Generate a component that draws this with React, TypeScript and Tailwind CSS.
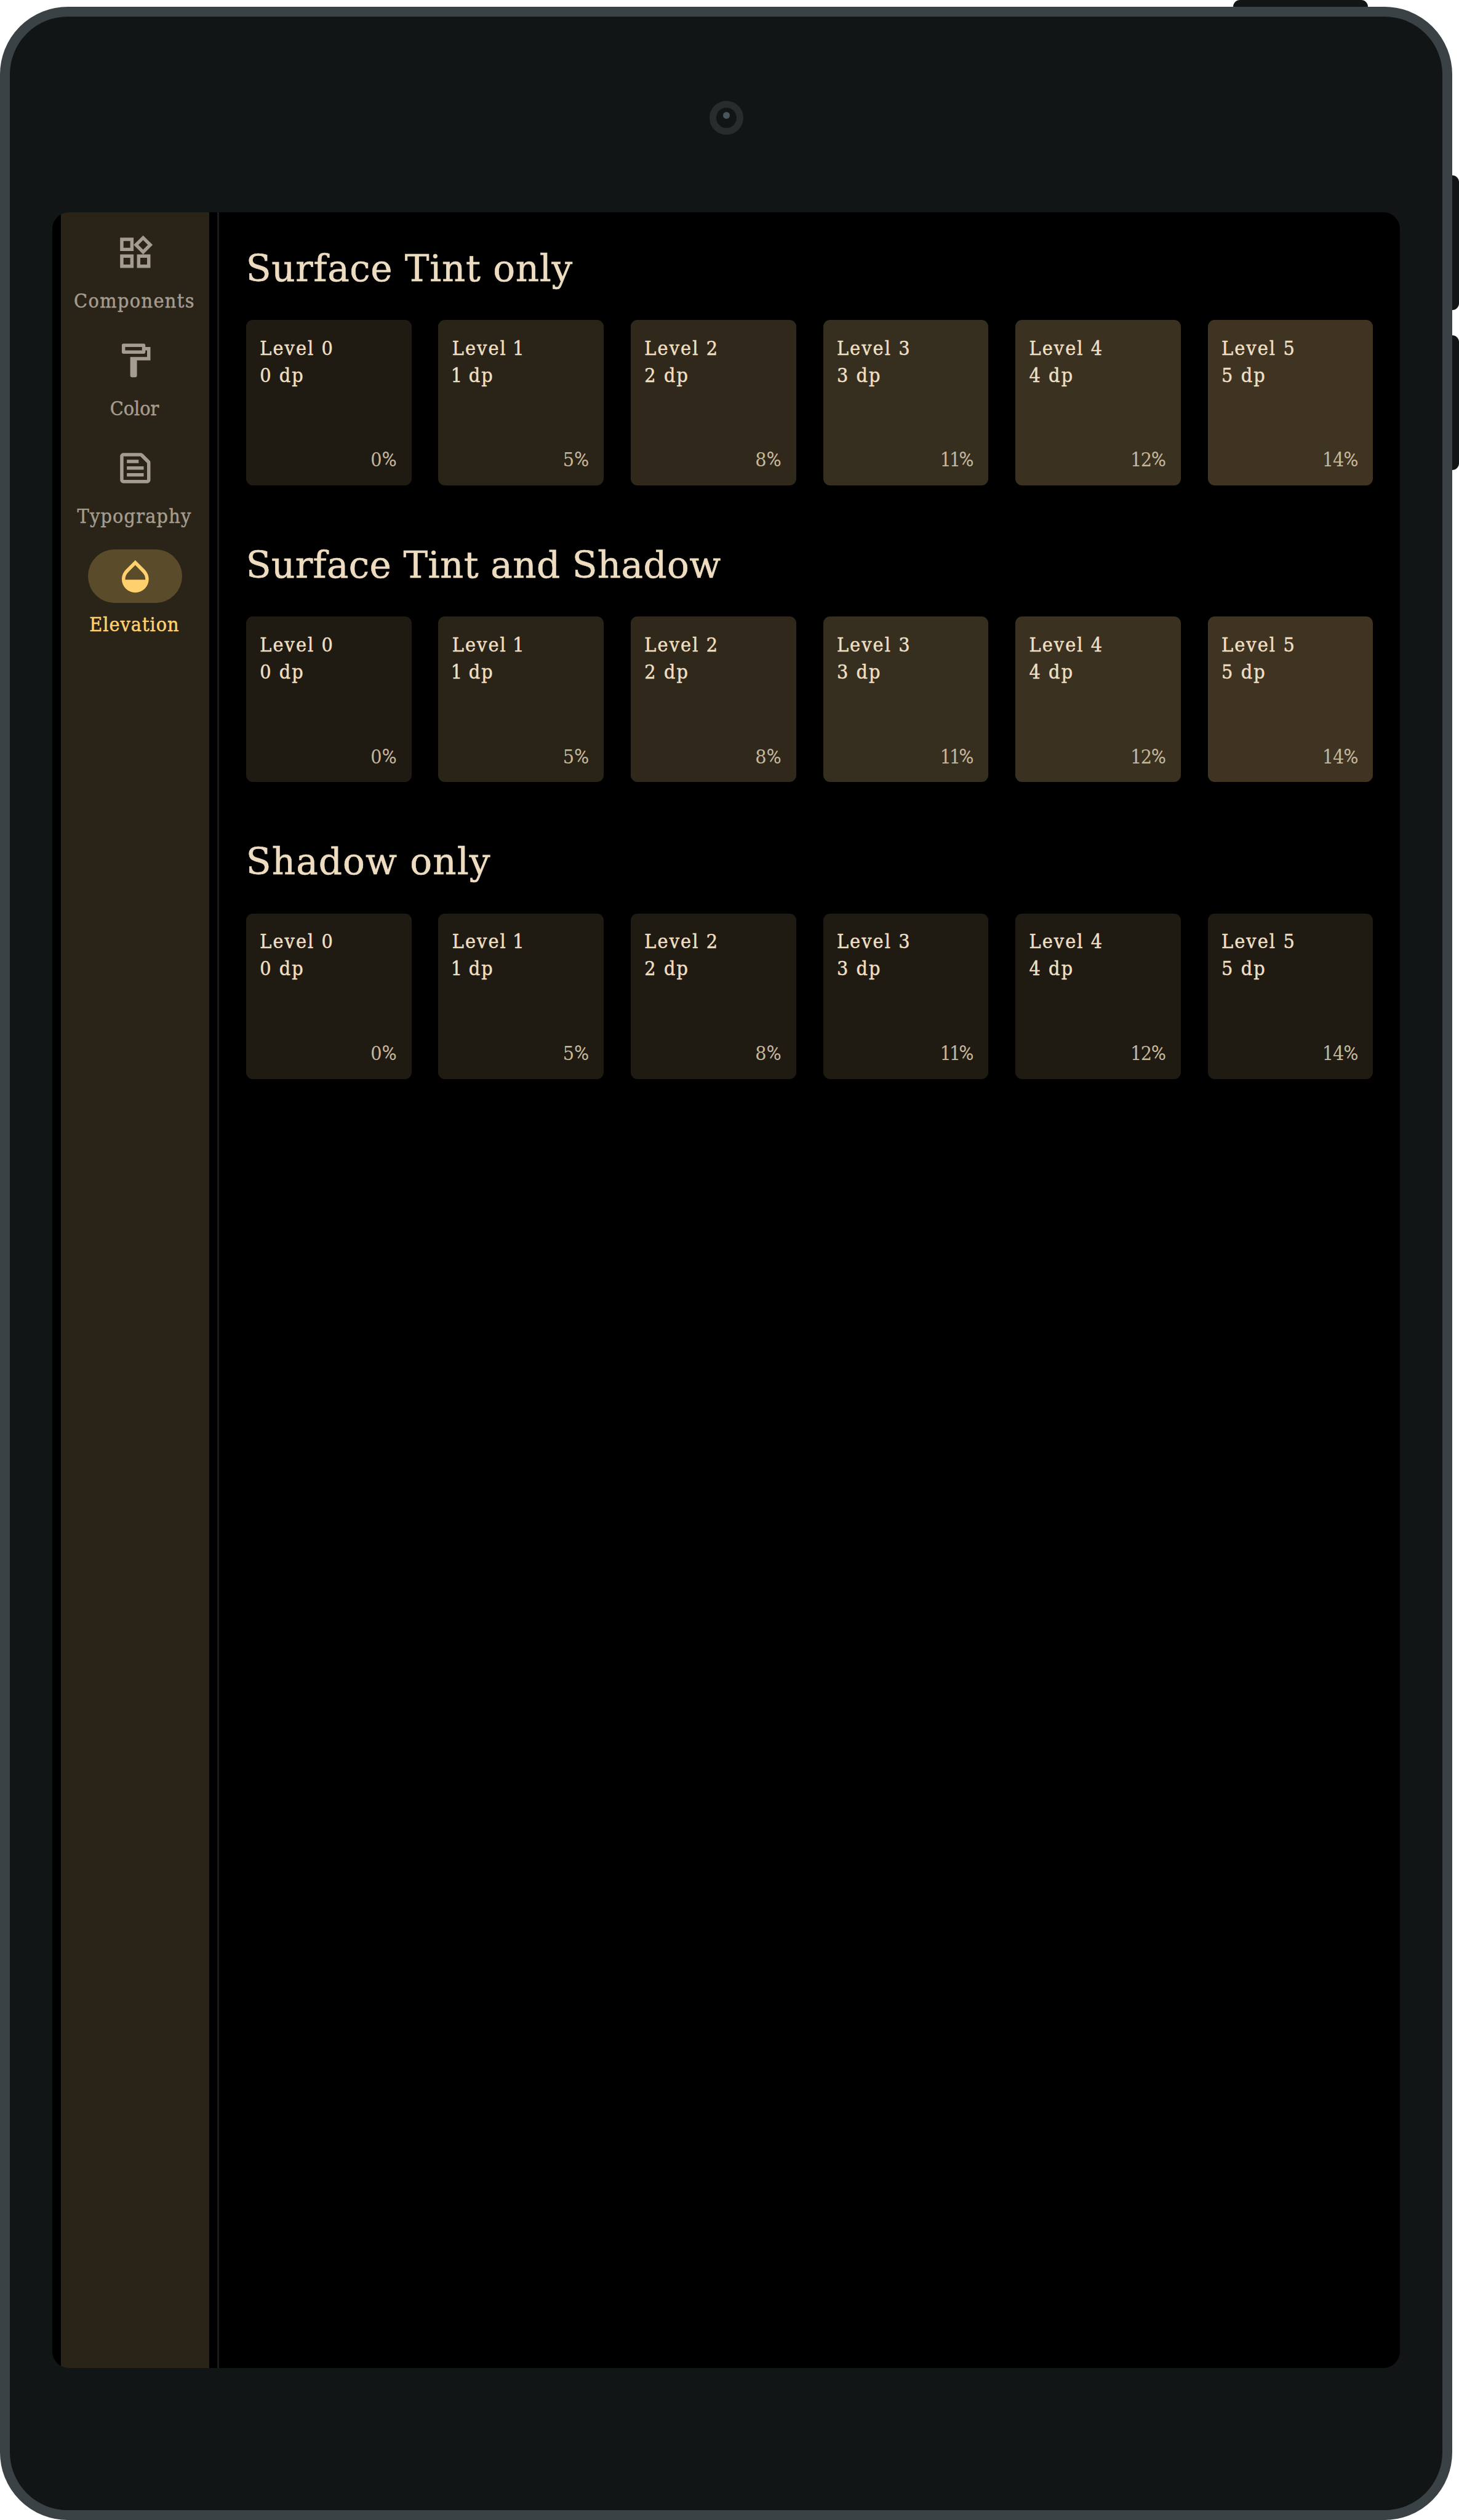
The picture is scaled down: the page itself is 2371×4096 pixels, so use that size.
import React from "react";

const ICONS = {
  components:
    "M16.66 4.52l2.83 2.83-2.83 2.83-2.83-2.83 2.83-2.83M9 5v4H5V5h4m10 10v4h-4v-4h4M9 15v4H5v-4h4m7.66-13.31L11 7.34 16.66 13l5.66-5.66-5.66-5.65zM11 3H3v8h8V3zm10 10h-8v8h8v-8zm-10 0H3v8h8v-8z",
  color:
    "M18 4V3c0-.55-.45-1-1-1H5c-.55 0-1 .45-1 1v4c0 .55.45 1 1 1h12c.55 0 1-.45 1-1V6h1v4H9v11c0 .55.45 1 1 1h2c.55 0 1-.45 1-1v-9h8V4h-3zm-2 2H6V4h10v2z",
  typography:
    "M15 5l4 4v10H5V5h10m.17-2H5c-1.11 0-2 .9-2 2v14c0 1.1.89 2 2 2h14c1.1 0 2-.9 2-2V8.83c0-.53-.21-1.04-.59-1.41l-3.83-3.83c-.37-.38-.88-.59-1.41-.59zM7 15h10v2H7v-2zm0-4h10v2H7v-2zm0-4h7v2H7V7z",
  elevation:
    "M17.66 8L12 2.35 6.34 8C4.78 9.56 4 11.64 4 13.64s.78 4.11 2.34 5.67 3.61 2.35 5.66 2.35 4.1-.79 5.66-2.35S20 15.64 20 13.64 19.22 9.56 17.66 8zM6 14c.01-2 .62-3.27 1.76-4.4L12 5.27l4.24 4.38C17.38 10.77 17.99 12 18 14H6z",
};

const NAV = [
  { label: "Components", icon: ICONS.components, tracking: "tracking-[1.4px]", active: false },
  { label: "Color", icon: ICONS.color, tracking: "tracking-normal", active: false },
  { label: "Typography", icon: ICONS.typography, tracking: "tracking-[1.2px]", active: false },
  { label: "Elevation", icon: ICONS.elevation, tracking: "tracking-[1px]", active: true },
];

const LEVELS = [
  { n: 0, pct: "0", tint: "bg-[#1f1b13]", pctTracking: "tracking-normal" },
  { n: 1, pct: "5", tint: "bg-[#2a2418]", pctTracking: "tracking-normal" },
  { n: 2, pct: "8", tint: "bg-[#30291b]", pctTracking: "tracking-normal" },
  { n: 3, pct: "11", tint: "bg-[#362f1f]", pctTracking: "tracking-[-3px]" },
  { n: 4, pct: "12", tint: "bg-[#3a3120]", pctTracking: "tracking-[-1.4px]" },
  { n: 5, pct: "14", tint: "bg-[#3f3421]", pctTracking: "tracking-[-1px]" },
];

const SECTIONS = [
  { title: "Surface Tint only", tinted: true, tracking: "tracking-[0.65px]" },
  { title: "Surface Tint and Shadow", tinted: true, tracking: "tracking-[0.35px]" },
  { title: "Shadow only", tinted: false, tracking: "tracking-[1.1px]" },
];

function Digit({ n }: { n: number }) {
  return <span className={n === 1 ? "-ml-[2px] tracking-[-0.5px]" : ""}>{n}</span>;
}

function NavItem({ label, icon, tracking, active }: (typeof NAV)[number]) {
  return (
    <div className={`flex flex-col items-center gap-[13.5px] ${active ? "text-[#ffd16e]" : "text-[#a59c90]"}`}>
      <div className={`flex h-[87.6px] w-[153.3px] items-center justify-center rounded-full ${active ? "bg-[#5a4b2a]" : ""}`}>
        <svg viewBox="0 0 24 24" className="h-[65.7px] w-[65.7px]" fill="currentColor">
          <path d={icon} />
        </svg>
      </div>
      <span className={`mr-[2px] text-[32px] leading-[43.8px] whitespace-nowrap [-webkit-text-stroke:0.5px_currentColor] ${tracking}`}>{label}</span>
    </div>
  );
}

function LevelCard({ level, tinted }: { level: (typeof LEVELS)[number]; tinted: boolean }) {
  return (
    <div
      className={`flex aspect-square flex-col justify-between rounded-[11px] pt-[24.5px] pr-[24px] pb-[18.9px] pl-[22.4px] text-[32px] leading-[43.8px] ${
        tinted ? level.tint : "bg-[#1f1b13]"
      }`}
    >
      <div className="tracking-[2.1px] whitespace-pre text-[#eedec2] [-webkit-text-stroke:0.5px_currentColor]">
        <div>
          Level <Digit n={level.n} />
        </div>
        <div>
          <Digit n={level.n} /> dp
        </div>
      </div>
      <div className="text-right text-[#c6b79c]">
        <span className={level.pctTracking}>{level.pct}</span>
        <span className="font-['Roboto'] text-[32.9px] leading-none">%</span>
      </div>
    </div>
  );
}

export default function App() {
  return (
    <div className="relative h-[4096px] w-[2371px] overflow-hidden bg-white pt-[11px] font-['DejaVu_Serif_Condensed','DejaVu_Serif',serif]">
      <div className="absolute top-0 left-[2004px] h-[22px] w-[219px] rounded-t-[11px] bg-[#111516]" />
      <div className="absolute top-[285px] right-0 h-[219px] w-[22px] rounded-r-[11px] bg-[#111516]" />
      <div className="absolute top-[545px] right-0 h-[219px] w-[22px] rounded-r-[11px] bg-[#111516]" />

      <div className="relative flex h-[4085px] w-[2360px] flex-col items-center rounded-[110px] border-[16.4px] border-[#3b4245] bg-[#111516]">
        <div className="flex h-[318px] shrink-0 items-start justify-center pt-[137px]">
          <div className="flex h-[55px] w-[55px] items-start justify-center rounded-full border-[11px] border-[#272c2e] pt-[7px]">
            <div className="h-[11px] w-[11px] rounded-full bg-[#4a565b]" />
          </div>
        </div>

        <div className="flex h-[3504px] w-[2190px] shrink-0 overflow-hidden rounded-[27px] bg-black">
          <nav className="ml-[14px] flex w-[241px] shrink-0 flex-col items-center gap-[30.3px] bg-[#2a2318] pt-[22px]">
            {NAV.map((item) => (
              <NavItem key={item.label} {...item} />
            ))}
          </nav>
          <div className="ml-[13px] w-[3px] shrink-0 bg-[#1b1b1b]" />
          <main className="flex grow flex-col gap-[91.8px] pt-[53.5px] pr-[43.6px] pl-[43.8px]">
            {SECTIONS.map((section) => (
              <section key={section.title} className="flex flex-col gap-[45px]">
                <h2
                  className={`font-['DejaVu_Serif',serif] text-[59.6px] leading-[76.7px] whitespace-nowrap text-[#eddcc0] [-webkit-text-stroke:0.6px_currentColor] ${section.tracking}`}
                >
                  {section.title}
                </h2>
                <div className="grid grid-cols-6 gap-[43.8px]">
                  {LEVELS.map((level) => (
                    <LevelCard key={level.n} level={level} tinted={section.tinted} />
                  ))}
                </div>
              </section>
            ))}
          </main>
        </div>
      </div>
    </div>
  );
}
